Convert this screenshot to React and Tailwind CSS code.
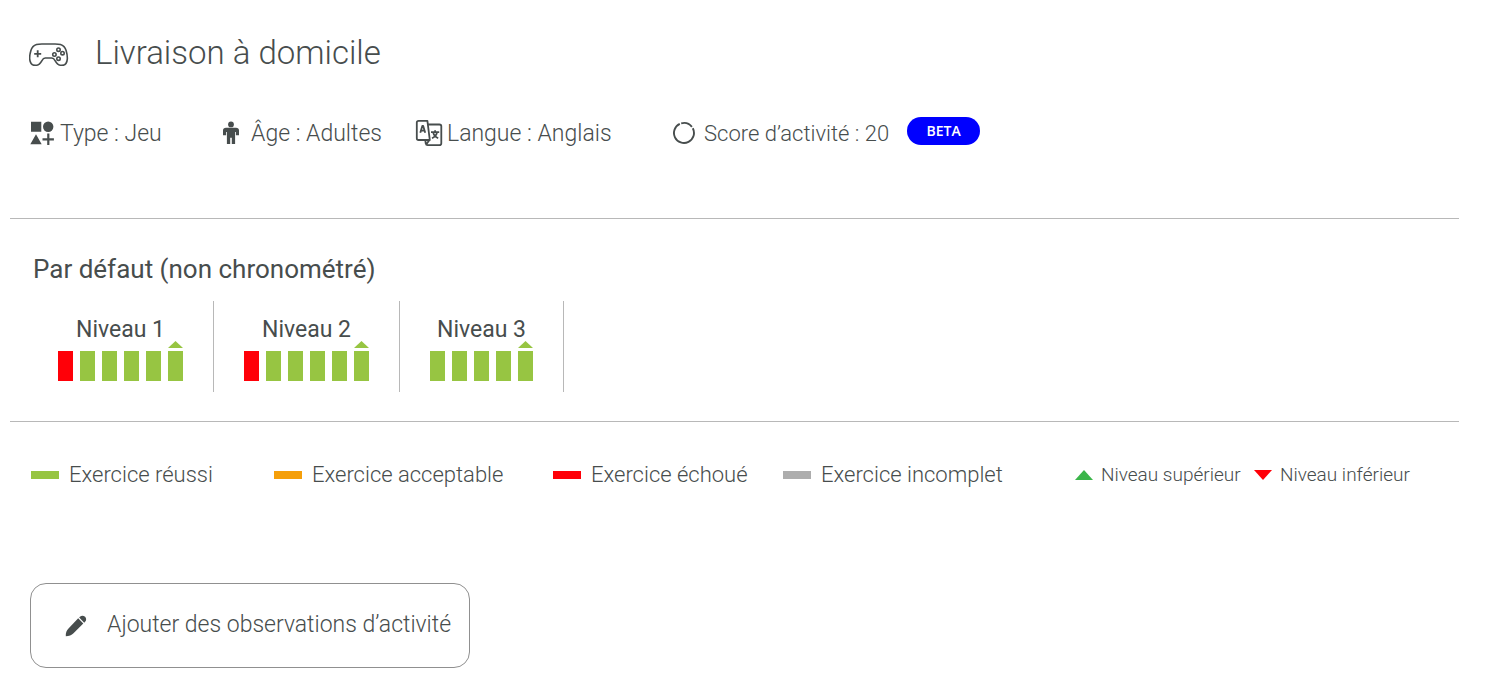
const TRACK_COLORS = {
  passed: 'bg-[#97c542]',
  failed: 'bg-[#ff0008]',
};

const LEVELS = [
  { name: 'Niveau 1', results: ['failed', 'passed', 'passed', 'passed', 'passed', 'passed'] },
  { name: 'Niveau 2', results: ['failed', 'passed', 'passed', 'passed', 'passed', 'passed'] },
  { name: 'Niveau 3', results: ['passed', 'passed', 'passed', 'passed', 'passed'] },
];

function GamepadIcon() {
  return (
    <svg width="40" height="25" viewBox="0.5 -2 40 25" fill="none" stroke="currentColor" strokeWidth="1.6" aria-hidden="true">
      <path d="M8 1.6C11 .7 13 1 16 1h8c3 0 5-.3 8 .6 3 .9 4.700 3 5.600 6 .9 3 1.400 6 1.200 8.500-.3 3.600-2.400 6.300-5.500 6.300-3.300 0-5.300-2.200-6.600-4.600-.9-1.700-1.700-2.800-3.500-2.800h-6.400c-1.800 0-2.600 1.100-3.500 2.800-1.300 2.400-3.300 4.600-6.600 4.600-3.100 0-5.200-2.700-5.500-6.300C1 13.600 1.500 10.600 2.400 7.600 3.300 4.600 5 2.500 8 1.600Z" />
      <path d="M9.200 7.300v7M5.700 10.800h7" strokeWidth="1.8" />
      <circle cx="30" cy="6.700" r="1.700" />
      <circle cx="30" cy="15.700" r="1.700" />
      <circle cx="25.900" cy="11.500" r="1.700" />
      <circle cx="34" cy="10.200" r="1.700" />
    </svg>
  );
}

function ShapesIcon() {
  return (
    <svg width="24" height="24" viewBox="0 0 24 24" fill="currentColor" aria-hidden="true">
      <path d="M1 .8h10.300v10H1zM6 13.300l5.700 9.900H.3z" />
      <circle cx="18.200" cy="5.700" r="5.200" />
      <path d="M17.200 12.600h2.200v4.700h4.500v2.200h-4.500V24h-2.200v-4.500h-4.700v-2.200h4.700z" />
    </svg>
  );
}

function PersonIcon() {
  return (
    <svg width="18" height="24" viewBox="0 0 18 24" fill="currentColor" aria-hidden="true">
      <circle cx="9" cy="3.400" r="2.900" />
      <path d="M4 6.800h10c1.900 0 3 1 3 2.700V14.200h-3.100v-3.200h-.8V23H9.800v-6.200H8.200V23H4.900V11h-.8v3.200H1V9.500C1 7.800 2.100 6.800 4 6.800Z" />
    </svg>
  );
}

function LanguageIcon() {
  return (
    <svg width="28" height="28" viewBox="0 0 28 28" fill="none" stroke="currentColor" strokeWidth="1.800" strokeLinejoin="round" aria-hidden="true">
      <path d="M12.400 1.800H3.600c-1.200 0-1.800.7-1.800 1.800v15.600c0 1.200.7 1.800 1.800 1.800h11.200L12.400 1.800Z" />
      <path d="M12.900 5.500h11.500c1.200 0 1.900.7 1.900 1.800v17c0 1.200-.7 1.900-1.900 1.900H12.700c-1.200 0-1.800-.7-2-1.800l-.4-3.200M14.400 21l-3.200 4.600" />
      <path d="m5.300 13.800 2-6.900h.9l2 6.900M6.100 11.600h3.300" strokeWidth="1.800" />
      <path d="M16 13.200h8.200M20.100 11.200v2M17 19.300c2.900-1.300 4.500-3.300 5-5.900M23.200 19.300c-2.900-1.300-4.500-3.300-5-5.900" strokeWidth="1.800" />
    </svg>
  );
}

function ScoreIcon() {
  return (
    <svg width="24" height="24" viewBox="0 0 24 24" fill="none" stroke="currentColor" strokeWidth="1.900" aria-hidden="true">
      <path d="M9.200 2.400A10 10 0 0 1 19.900 5.900M20.800 7.300A10 10 0 1 1 7.800 2.900" />
    </svg>
  );
}

function PencilIcon() {
  return (
    <svg width="22" height="22" viewBox="0 0 22 22" fill="currentColor" aria-hidden="true">
      <path d="M13.200 3.200 18.300 8.400 8.500 18.200c-1.800 1.800-4.600 3-7.700 3-.3-3.100.9-5.900 2.700-7.700Z" />
      <path d="m14.200 2.400.7-.7c1.500-1.400 3.700-1.300 5.200 0 1.400 1.500 1.400 3.600 0 5.100l-.9.900Z" />
    </svg>
  );
}

function Triangle({ down = false, className }) {
  return (
    <svg className={className} viewBox="0 0 18 9" preserveAspectRatio="none" fill="currentColor" aria-hidden="true">
      <path d={down ? 'M0 0h18L9 9Z' : 'M9 0l9 9H0Z'} />
    </svg>
  );
}

function Level({ name, results }) {
  return (
    <li className="flex flex-col items-center border-r border-[#b8b8b8] px-[30px] pt-[13px] pb-[11px]">
      <h3 className="text-[23px] leading-[31px] font-normal">{name}</h3>
      <div className="flex items-end gap-[7px]">
        {results.map((result, index) => (
          <div key={index} className="flex h-9 flex-col items-center justify-between">
            {index === results.length - 1 ? (
              <Triangle className="-mt-1 h-[7px] w-[15px] text-[#97c542]" />
            ) : (
              <span />
            )}
            <span className={`h-[30px] w-[15px] ${TRACK_COLORS[result]}`} />
          </div>
        ))}
      </div>
    </li>
  );
}

function Legend({ color, children }) {
  return (
    <li className="flex items-center gap-[10px] text-[22px]">
      <span className={`h-2 w-7 ${color}`} />
      {children}
    </li>
  );
}

export default function App() {
  return (
    <main className="bg-white pr-[29px] pb-6 pl-[10px] font-[Roboto,sans-serif] font-light whitespace-nowrap text-[#474d4d]">
      <header className="px-[19px] pt-[31px] pb-[68px]">
        <div className="flex items-center gap-[26px]">
          <GamepadIcon />
          <h1 className="text-[33px] leading-[44px] font-light">Livraison à domicile</h1>
        </div>
        <ul className="mt-[41px] grid grid-cols-[192px_193px_257px_auto] items-center justify-start pl-px text-[23px] leading-8">
          <li className="flex items-center gap-[6px]">
            <ShapesIcon />
            <span className="pt-[2px]">Type : Jeu</span>
          </li>
          <li className="flex items-center gap-[11px]">
            <PersonIcon />
            <span className="pt-[2px]">Âge : Adultes</span>
          </li>
          <li className="flex items-center gap-1">
            <LanguageIcon />
            <span className="pt-[2px]">Langue : Anglais</span>
          </li>
          <li className="flex items-center gap-2">
            <ScoreIcon />
            <span className="pt-[2px] text-[22px]">Score d’activité : 20</span>
            <span className="mb-1 ml-[10px] flex h-7 w-[73px] items-center justify-center rounded-full bg-[#0000ff] font-['Open_Sans',sans-serif] text-sm font-semibold text-white">
              BETA
            </span>
          </li>
        </ul>
      </header>

      <section className="border-y border-[#b8b8b8] pt-8 pb-[29px]">
        <h2 className="px-[23px] text-[26px] leading-9 font-normal">Par défaut (non chronométré)</h2>
        <ul className="mt-[14px] flex pl-[18px]">
          {LEVELS.map((level) => (
            <Level key={level.name} {...level} />
          ))}
        </ul>
      </section>

      <ul className="mt-[37px] grid grid-cols-[243px_279px_230px_292px_179px_auto] items-center justify-start px-[21px] leading-8">
        <Legend color="bg-[#97c542]">Exercice réussi</Legend>
        <Legend color="bg-[#f59f0a]">Exercice acceptable</Legend>
        <Legend color="bg-[#ff0008]">Exercice échoué</Legend>
        <Legend color="bg-[#adadad]">Exercice incomplet</Legend>
        <li className="flex items-center gap-2 text-[19px]">
          <Triangle className="h-[10px] w-[18px] text-[#3bb54a]" />
          Niveau supérieur
        </li>
        <li className="flex items-center gap-2 text-[19px]">
          <Triangle down className="h-[10px] w-[18px] text-[#ff0008]" />
          Niveau inférieur
        </li>
      </ul>

      <button
        type="button"
        className="mt-[92px] ml-5 flex h-[85px] cursor-pointer items-center gap-5 rounded-2xl border border-[#909090] pr-[18px] pl-[34px] text-[23px]"
      >
        <PencilIcon />
        Ajouter des observations d’activité
      </button>
    </main>
  );
}
